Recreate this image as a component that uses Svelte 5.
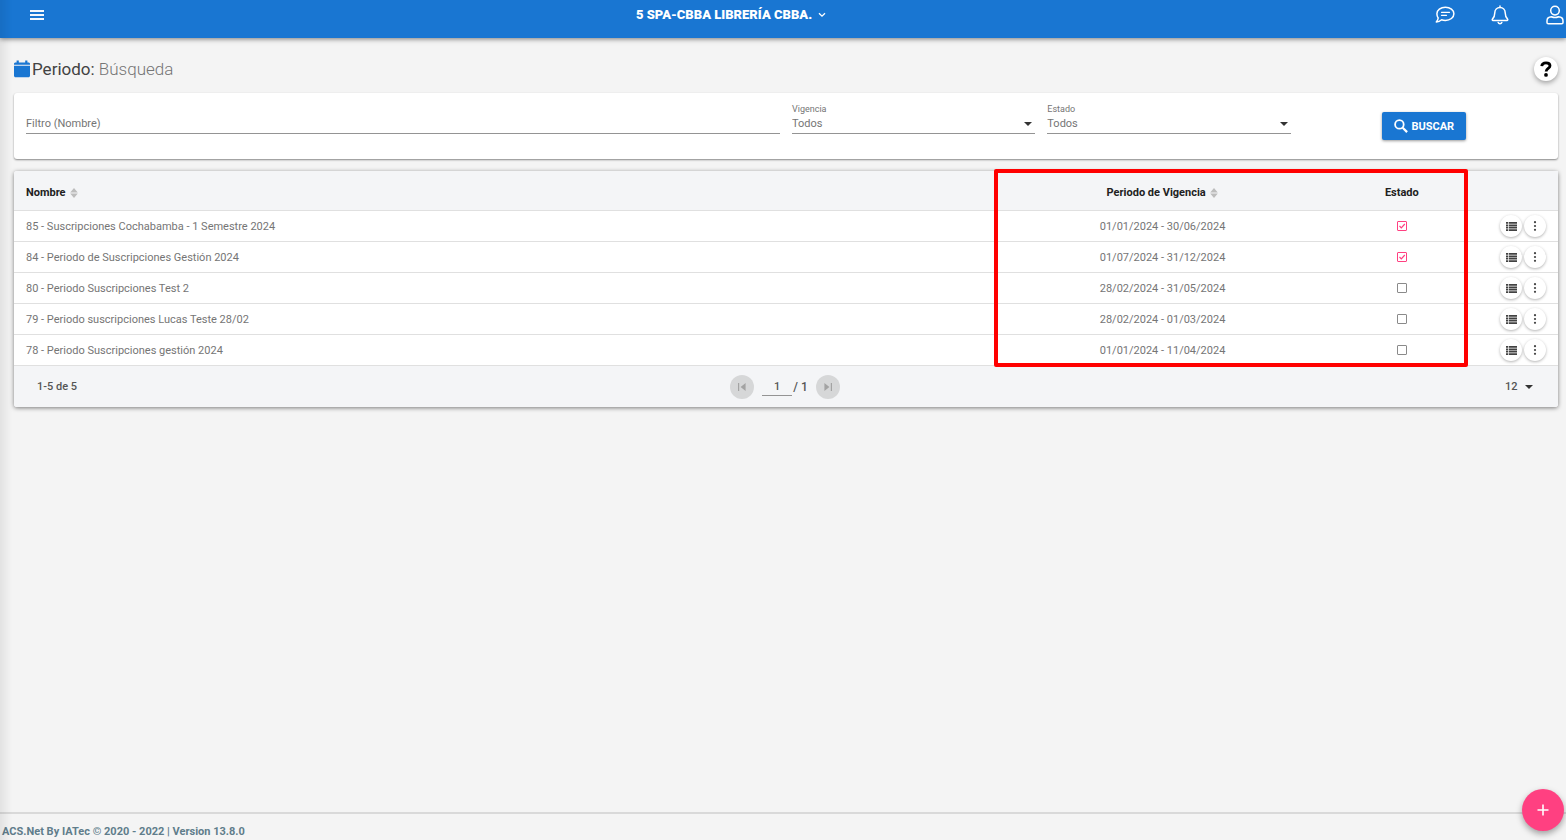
<script lang="ts">
  type Period = {
    id: number;
    name: string;
    range: string;
    active: boolean;
  };

  let filter = $state('');
  let validity = $state('Todos');
  let status = $state('Todos');
  let page = $state('1');
  let pageSize = $state('12');

  let periods: Period[] = $state([
    { id: 85, name: 'Suscripciones Cochabamba - 1 Semestre 2024', range: '01/01/2024 - 30/06/2024', active: true },
    { id: 84, name: 'Periodo de Suscripciones Gestión 2024', range: '01/07/2024 - 31/12/2024', active: true },
    { id: 80, name: 'Periodo Suscripciones Test 2', range: '28/02/2024 - 31/05/2024', active: false },
    { id: 79, name: 'Periodo suscripciones Lucas Teste 28/02', range: '28/02/2024 - 01/03/2024', active: false },
    { id: 78, name: 'Periodo Suscripciones gestión 2024', range: '01/01/2024 - 11/04/2024', active: false },
  ]);
</script>

{#snippet sortIcon()}
  <svg class="sort" width="8" height="10" viewBox="0 0 8 10" aria-hidden="true">
    <path d="M4 0 7.8 4.400H.2zM4 10 .2 5.600h7.600z" fill="#bdbdbd" />
  </svg>
{/snippet}

<div class="page">
  <header class="topbar">
    <button type="button" class="icon-btn" aria-label="Menú">
      <svg width="14" height="10" viewBox="0 0 14 10" fill="#fff">
        <path d="M0 0h14v2H0zM0 4h14v2H0zM0 8h14v2H0z" opacity=".95" />
      </svg>
    </button>
    <button type="button" class="entity">
      5 SPA-CBBA LIBRERÍA CBBA.
      <svg width="8" height="6" viewBox="0 0 8 6" fill="none" stroke="#fff" stroke-width="1.3">
        <path d="M1 1.2 4 4.2 7 1.2" />
      </svg>
    </button>
    <nav class="top-actions">
      <button type="button" class="icon-btn" aria-label="Mensajes">
        <svg width="20" height="18" viewBox="0 0 20 18" fill="none" stroke="#fff" stroke-width="1.5" stroke-linecap="round" stroke-linejoin="round">
          <path d="M10.4 1.2c4.800 0 8.500 2.900 8.500 6.600s-3.700 6.600-8.500 6.600c-1.400 0-2.700-.2-3.800-.7-1.300 1.100-3 2-5.300 2.200 1-1.100 1.700-2.300 1.900-3.900C2.300 10.900 1.900 9.400 1.900 7.800c0-3.700 3.700-6.600 8.500-6.600z" />
          <path d="M6.500 6.300h8M6.500 9.300h5" stroke-width="1.300" />
        </svg>
      </button>
      <button type="button" class="icon-btn" aria-label="Notificaciones">
        <svg width="18" height="20" viewBox="0 0 18 20" fill="none" stroke="#fff" stroke-width="1.500" stroke-linecap="round" stroke-linejoin="round">
          <path d="M9 1v1.500M9 2.500c-3 0-5.200 2.300-5.200 5.300 0 3.700-1 5-2.400 6.300-.4.500-.1 1.300.6 1.300h14c.7 0 1-.8.6-1.300-1.400-1.300-2.400-2.600-2.400-6.300 0-3-2.200-5.300-5.200-5.300z" />
          <path d="M7.200 17.400c.3.900 1 1.300 1.800 1.300s1.500-.4 1.800-1.300" />
        </svg>
      </button>
      <button type="button" class="icon-btn" aria-label="Usuario">
        <svg width="18" height="20" viewBox="0 0 18 20" fill="none" stroke="#fff" stroke-width="1.500" stroke-linejoin="round">
          <circle cx="9" cy="5.600" r="4.300" />
          <path d="M5.500 11.800c1.100.5 2.200.8 3.500.8s2.400-.3 3.500-.8c2.700.1 4.500 1.800 4.500 4.200v1.500c0 .8-.5 1.300-1.300 1.300H2.300c-.8 0-1.300-.5-1.300-1.300V16c0-2.400 1.800-4.100 4.500-4.200z" />
        </svg>
      </button>
    </nav>
  </header>

  <main>
    <div class="title-row">
      <h1>
        <svg width="16" height="18" viewBox="0 0 16 18" fill="#1976d2" aria-hidden="true">
          <path d="M2.600.4h2.200v2h6.400v-2h2.200v2h1c.9 0 1.600.6 1.600 1.400v1H0v-1c0-.8.700-1.400 1.600-1.400h1zM0 5.800h16v10c0 .9-.7 1.500-1.600 1.500H1.600c-.9 0-1.600-.6-1.600-1.500z" />
        </svg>
        <span>Periodo: <small>Búsqueda</small></span>
      </h1>
      <button type="button" class="help" aria-label="Ayuda">
        <svg width="12" height="16" viewBox="0 0 12 16" fill="none" stroke="#000" stroke-width="2.800">
          <path d="M1.700 5.100C2 2.900 3.600 1.800 6 1.800c2.300 0 4 1.100 4 3 0 2.600-3.900 2.600-3.900 5.700" />
          <circle cx="6" cy="13.900" r="1.900" fill="#000" stroke="none" />
        </svg>
      </button>
    </div>

    <form class="card filters" onsubmit={(e) => e.preventDefault()}>
      <div class="field wide">
        <input type="text" bind:value={filter} placeholder="Filtro (Nombre)" aria-label="Filtro (Nombre)" />
      </div>
      <div class="field">
        <label for="validity">Vigencia</label>
        <select id="validity" bind:value={validity}>
          <option>Todos</option>
          <option>Vigente</option>
        </select>
      </div>
      <div class="field">
        <label for="status">Estado</label>
        <select id="status" bind:value={status}>
          <option>Todos</option>
          <option>Activo</option>
        </select>
      </div>
      <div class="submit">
        <button type="submit" class="search">
          <svg width="14" height="14" viewBox="0 0 14 14" fill="none" stroke="#fff" aria-hidden="true">
            <circle cx="5.400" cy="5.400" r="4.300" stroke-width="1.800" />
            <path d="m8.700 8.700 4.400 4.400" stroke-width="2.200" />
          </svg>
          BUSCAR
        </button>
      </div>
    </form>

    <section class="card results">
      <div class="table-wrap">
        <table>
          <colgroup>
            <col />
            <col class="col-range" />
            <col class="col-status" />
            <col class="col-actions" />
          </colgroup>
          <thead>
            <tr>
              <th class="name">Nombre {@render sortIcon()}</th>
              <th>Periodo de Vigencia {@render sortIcon()}</th>
              <th>Estado</th>
              <td></td>
            </tr>
          </thead>
          <tbody>
            {#each periods as period (period.id)}
              <tr>
                <td class="name">{period.id} - {period.name}</td>
                <td>{period.range}</td>
                <td><input type="checkbox" bind:checked={period.active} aria-label="Estado {period.id}" /></td>
                <td>
                  <div class="row-actions">
                    <button type="button" class="round" aria-label="Detalles">
                      <svg width="11" height="9" viewBox="0 0 11 9" fill="#424242">
                        <path d="M0 0h2v1.800H0zM2.700 0H11v1.800H2.700zM0 2.400h2v1.800H0zM2.700 2.400H11v1.800H2.700zM0 4.800h2v1.800H0zM2.700 4.800H11v1.800H2.700zM0 7.200h2V9H0zM2.700 7.200H11V9H2.700z" />
                      </svg>
                    </button>
                    <button type="button" class="round" aria-label="Más opciones">
                      <svg width="4" height="10" viewBox="0 0 4 10" fill="#424242">
                        <circle cx="2" cy="1.200" r="1.100" />
                        <circle cx="2" cy="5" r="1.100" />
                        <circle cx="2" cy="8.800" r="1.100" />
                      </svg>
                    </button>
                  </div>
                </td>
              </tr>
            {/each}
          </tbody>
        </table>
        <div class="highlight"></div>
      </div>

      <div class="pager">
        <span class="count">1-5 de 5</span>
        <div class="pages">
          <button type="button" class="step" disabled aria-label="Primera página">
            <svg width="8" height="8" viewBox="0 0 8 8" fill="#a3a3a3"><path d="M0 0h1.200v8H0zM7.600 0v8L2.600 4z" /></svg>
          </button>
          <div class="page-of">
            <input type="text" bind:value={page} aria-label="Página" />
            <span>/ 1</span>
          </div>
          <button type="button" class="step" disabled aria-label="Última página">
            <svg width="8" height="8" viewBox="0 0 8 8" fill="#a3a3a3"><path d="M6.800 0H8v8H6.800zM.4 0v8l5-4z" /></svg>
          </button>
        </div>
        <select class="page-size" bind:value={pageSize} aria-label="Registros por página">
          <option>12</option>
          <option>24</option>
        </select>
      </div>
    </section>
  </main>

  <footer>ACS.Net By IATec © 2020 - 2022 | Version 13.8.0</footer>

  <div class="edge-shadow"></div>
  <button type="button" class="fab" aria-label="Agregar">
    <svg width="12" height="12" viewBox="0 0 12 12" stroke="#fff" stroke-width="1.600"><path d="M6 .5v11M.5 6h11" /></svg>
  </button>
</div>

<style>
  :global(body) {
    background: #f4f4f4;
  }

  .page {
    display: flex;
    flex-direction: column;
    min-height: 100vh;
    font-family: Roboto, 'Liberation Sans', sans-serif;
    font-size: 11px;
    color: #757575;
  }

  .page * {
    box-sizing: border-box;
  }

  button,
  input,
  select {
    font: inherit;
    color: inherit;
    margin: 0;
    padding: 0;
    border: none;
    outline: none;
    background: transparent;
  }

  button {
    display: flex;
    align-items: center;
    justify-content: center;
    cursor: pointer;
  }

  svg {
    flex: none;
  }

  .topbar {
    display: grid;
    grid-template-columns: 1fr auto 1fr;
    align-items: center;
    height: 38px;
    padding: 0 1px 9px 27px;
    background: #1976d2;
    color: #fff;
    box-shadow: 0 1px 5px rgba(0, 0, 0, 0.5);
  }

  .icon-btn {
    width: 20px;
    height: 20px;
  }

  .entity {
    gap: 6px;
    padding-right: 130px;
    font-size: 13px;
    font-weight: 900;
  }

  .top-actions {
    display: flex;
    justify-content: flex-end;
    gap: 35px;
  }

  main {
    padding: 0 8px 0 14px;
  }

  .title-row {
    display: flex;
    align-items: center;
    justify-content: space-between;
    height: 55px;
    padding-top: 6px;
  }

  h1 {
    display: flex;
    align-items: center;
    gap: 2px;
    margin: 0;
    font-size: 17px;
    font-weight: 400;
    color: #424242;
  }

  h1 small {
    font-size: 17px;
    font-weight: 300;
    color: #757575;
  }

  .help {
    width: 24px;
    height: 24px;
    border-radius: 50%;
    background: #fff;
    box-shadow: 0 2px 5px rgba(0, 0, 0, 0.35);
  }

  .card {
    border-radius: 3px;
    background: #fff;
  }

  /* half of the row for the text filter, the rest shared by the other three */
  .filters {
    display: grid;
    grid-template-columns: calc(50% - 6px) repeat(3, 1fr);
    column-gap: 12px;
    height: 66px;
    padding: 10px 12px 0;
    box-shadow: 0 1px 2px rgba(0, 0, 0, 0.45);
  }

  .field {
    display: flex;
    flex-direction: column;
    height: 31px;
    border-bottom: 1px solid #949494;
  }

  .wide {
    justify-content: flex-end;
  }

  .field label {
    font-size: 9px;
    line-height: 12px;
  }

  .field input,
  .field select {
    width: 100%;
    height: 18px;
    line-height: 18px;
  }

  .wide input {
    height: 20px;
  }

  input::placeholder {
    color: #757575;
    opacity: 1;
  }

  select {
    appearance: none;
    background: url("data:image/svg+xml,%3Csvg xmlns='http://www.w3.org/2000/svg' width='8' height='4'%3E%3Cpath d='M0 0h8L4 4z' fill='%23333'/%3E%3C/svg%3E") no-repeat right 3px center;
  }

  .submit {
    display: flex;
    align-items: flex-start;
    justify-content: center;
    padding-top: 9px;
  }

  .search {
    gap: 3px;
    height: 28px;
    padding: 0 12px;
    border-radius: 2px;
    background: #1976d2;
    color: #fff;
    font-weight: 700;
    box-shadow: 0 1px 3px rgba(0, 0, 0, 0.4);
  }

  .results {
    margin-top: 12px;
    box-shadow: 0 1px 4px rgba(0, 0, 0, 0.5);
  }

  .table-wrap {
    position: relative;
  }

  table {
    width: 100%;
    table-layout: fixed;
    border-collapse: separate;
    border-spacing: 0;
  }

  .col-range {
    width: 22.3%;
  }

  .col-status {
    width: 8.7%;
  }

  .col-actions {
    width: 89px;
  }

  th,
  td {
    height: 31px;
    padding: 0;
    text-align: center;
    border-bottom: 1px solid #e0e0e0;
  }

  .name {
    padding-left: 12px;
    text-align: left;
  }

  thead th,
  thead td {
    height: 40px;
    padding-top: 4px;
    background: #f4f5f7;
    font-weight: 700;
    color: #212121;
  }

  thead :first-child {
    border-top-left-radius: 3px;
  }

  .sort {
    margin-left: 2px;
    vertical-align: -2px;
  }

  input[type='checkbox'] {
    display: block;
    width: 10px;
    height: 10px;
    margin: 0 auto;
    appearance: none;
    border: 1px solid #8a8a8a;
    border-radius: 1px;
  }

  input[type='checkbox']:checked {
    border-color: #ff4081;
    background: url("data:image/svg+xml,%3Csvg xmlns='http://www.w3.org/2000/svg' width='8' height='8'%3E%3Cpath d='M1.500 4 3.300 5.800 6.800 2' fill='none' stroke='%23ff4081' stroke-width='1.200'/%3E%3C/svg%3E") no-repeat center;
  }

  .row-actions {
    display: flex;
    justify-content: flex-end;
    gap: 2px;
    padding-right: 12px;
  }

  .round {
    width: 22px;
    height: 22px;
    border-radius: 50%;
    background: #fff;
    box-shadow: 0 1px 3px rgba(0, 0, 0, 0.3);
  }

  .highlight {
    position: absolute;
    top: -2px;
    right: 90px;
    bottom: -1px;
    left: 63.5%;
    border: 4px solid #f00;
    border-radius: 2px;
    pointer-events: none;
  }

  .pager {
    display: grid;
    grid-template-columns: 1fr auto 1fr;
    align-items: center;
    height: 41px;
    padding: 0 25px 0 23px;
    border-radius: 0 0 3px 3px;
    background: #f4f5f7;
    font-weight: 500;
    color: #555;
  }

  .pages {
    display: flex;
    align-items: center;
    gap: 8px;
  }

  .page-of {
    display: flex;
    align-items: center;
    gap: 1px;
  }

  .page-of input {
    width: 30px;
    height: 18px;
    border-bottom: 1px solid #949494;
    text-align: center;
  }

  .page-of span {
    font-size: 12px;
  }

  .step {
    width: 24px;
    height: 24px;
    border-radius: 50%;
    background: #d6d7d8;
  }

  .page-size {
    justify-self: end;
    width: 28px;
    height: 20px;
    background-position: right center;
  }

  footer {
    height: 28px;
    margin-top: auto;
    padding: 11px 2px 0;
    border-top: 2px solid #d9d9d9;
    font-weight: 700;
    line-height: 13px;
    color: #607d8b;
  }

  /* shadow cast by the closed side menu */
  .edge-shadow {
    position: fixed;
    top: 0;
    bottom: 0;
    left: 0;
    width: 12px;
    background: linear-gradient(to right, rgba(0, 0, 0, 0.07), transparent);
    pointer-events: none;
  }

  .fab {
    position: fixed;
    right: 2px;
    bottom: 9px;
    width: 42px;
    height: 42px;
    border-radius: 50%;
    background: #ff4081;
    box-shadow: 0 3px 6px rgba(0, 0, 0, 0.35);
  }
</style>
